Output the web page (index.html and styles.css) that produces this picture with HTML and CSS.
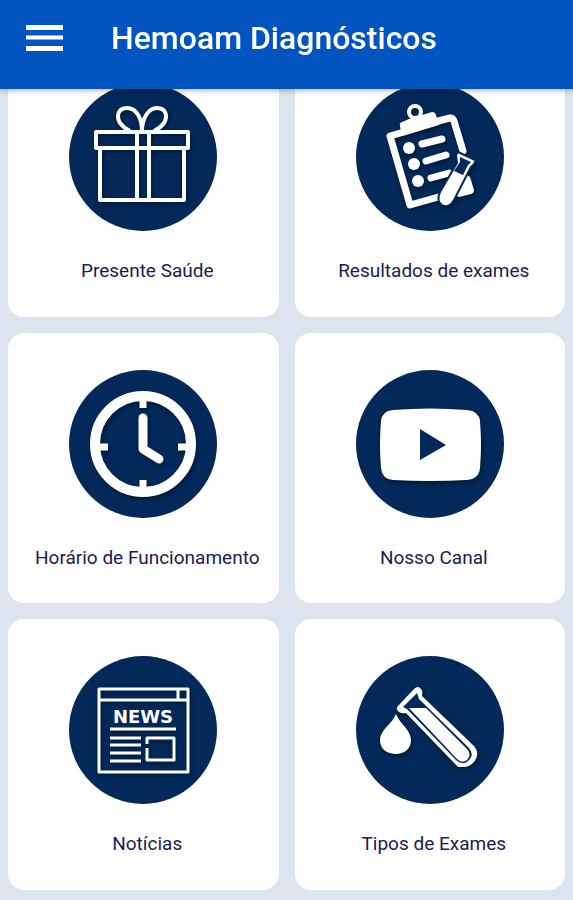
FILE: index.html
```
<!DOCTYPE html>
<html lang="pt-BR">

<head>
    <meta charset="UTF-8">
    <meta name="viewport" content="width=device-width, initial-scale=1.0">
    <title>Hemoam Diagnósticos</title>
    <link rel="stylesheet" href="styles.css">
</head>

<body>
    <header class="topbar">
        <button class="menu-btn" type="button" aria-label="Menu">
            <svg width="37" height="26" viewBox="0 0 37 26" fill="#fff">
                <path d="M0 0h37v5H0zM0 10.500h37v4H0zM0 21h37v5H0z" />
            </svg>
        </button>
        <h1 class="topbar-title">Hemoam Diagnósticos</h1>
    </header>

    <main class="cards">
        <a class="card" href="#presente">
            <svg class="card-icon" viewBox="0 0 148 148">
                <circle class="disc" cx="74" cy="74" r="74" />
                <g class="line">
                    <rect x="27" y="49" width="92" height="16" />
                    <path d="M31 65v52h84V65" />
                    <path d="M68 49v68M80 49v68" />
                    <path d="M73 48C73 36 68 25 58 25C49 25 47 33 51 40C54 44 57 46 61 48" />
                    <path d="M73 48C73 36 79 25 88 25C97 25 99 33 95 40C92 44 89 46 85 48" />
                </g>
            </svg>
            <span class="card-label">Presente Saúde</span>
        </a>

        <a class="card" href="#resultados">
            <svg class="card-icon" viewBox="0 0 148 148">
                <circle class="disc" cx="74" cy="74" r="74" />
                <g class="shape">
                    <!-- prancheta -->
                    <path d="M48 49L34 53L54 122L86 113M82 38L94 35Q97 35 98 38L107 68" fill="none" stroke="#fff" stroke-width="7" stroke-linejoin="round" stroke-linecap="round" />
                    <path d="M111 92L114 94L118 107Q118 110 115 111L103 114L99 112Z" fill="#fff" />
                    <path d="M44 43Q43 40 46 39L53 36L66 32L76 29Q79 29 80 32L81 36Q85 38 83 42L50 52Q45 53 45 49Z" fill="#fff" />
                    <circle cx="59" cy="29" r="6" fill="none" stroke="#fff" stroke-width="4" />
                    <circle cx="53" cy="65" r="6" fill="#fff" />
                    <circle cx="58" cy="81" r="6" fill="#fff" />
                    <circle cx="62" cy="98" r="6" fill="#fff" />
                    <path d="M66 61L86 56M70 78L90 72M75 95L93 90" stroke="#fff" stroke-width="7" stroke-linecap="round" />
                    <!-- tubo -->
                    <path d="M102 69L119 77Q120 80 115 84L98 117Q93 126 86 122Q80 118 84 109L101 80L100 72Z" fill="#fff" stroke="#02295a" stroke-width="2" />
                    <path d="M104 74L115 79L112 82L107 92L98 88L104 79Z" fill="#02295a" />
                </g>
            </svg>
            <span class="card-label">Resultados de exames</span>
        </a>

        <a class="card" href="#horario">
            <svg class="card-icon" viewBox="0 0 148 148">
                <circle class="disc" cx="74" cy="74" r="74" />
                <g class="shape" fill="none" stroke="#fff">
                    <circle cx="74" cy="74" r="48" stroke-width="10" />
                    <path d="M74 28v10M74 110v10M28 77h11M109 77h11" stroke-width="7" />
                    <path d="M74 48v31l16 10" stroke-width="9" stroke-linecap="round" stroke-linejoin="round" />
                </g>
            </svg>
            <span class="card-label">Horário de Funcionamento</span>
        </a>

        <a class="card" href="#canal">
            <svg class="card-icon" viewBox="0 0 148 148">
                <circle class="disc" cx="74" cy="74" r="74" />
                <g class="shape">
                    <path d="M37 40Q74 37 111 40Q123 41 124 51Q126 75 124 98Q123 109 111 110Q74 112 37 110Q26 109 25 98Q23 75 25 51Q26 41 37 40Z" fill="#fff" />
                    <path d="M64 59v31l26-15z" fill="#02295a" />
                </g>
            </svg>
            <span class="card-label">Nosso Canal</span>
        </a>

        <a class="card" href="#noticias">
            <svg class="card-icon" viewBox="0 0 148 148">
                <circle class="disc" cx="74" cy="74" r="74" />
                <g class="line news">
                    <rect x="30" y="33" width="89" height="83" />
                    <path d="M30 44h89M109 33v11" />
                    <path d="M41 73h66M41 82h31M41 89h31M41 97h31M41 105h31" />
                    <path d="M78 88v-6h27v22H78v-12" />
                </g>
                <text class="news-text" x="74" y="67" text-anchor="middle">NEWS</text>
            </svg>
            <span class="card-label">Notícias</span>
        </a>

        <a class="card" href="#tipos">
            <svg class="card-icon" viewBox="0 0 148 148">
                <circle class="disc" cx="74" cy="74" r="74" />
                <g class="shape">
                    <!-- gota -->
                    <path d="M40 58C44 68 55 74 55 84C55 93 48 98 40 98C31 98 24 93 24 84C24 74 36 68 40 58Z" fill="#fff" />
                    <!-- tubo -->
                    <path d="M42 50L58 33Q62 29 65 33Q67 35 66 40L118 90Q125 98 117 107Q113 111 108 111L102 111L50 57Q46 58 43 56Q39 53 42 50Z" fill="#fff" />
                    <path d="M47 51L61 37L63 43L113 92Q119 99 112 105Q106 110 100 104L51 53Z" fill="#02295a" />
                    <path d="M53 52L70 52L111 93Q116 99 111 104Q106 108 101 103Z" fill="#fff" />
                </g>
            </svg>
            <span class="card-label">Tipos de Exames</span>
        </a>
    </main>
</body>

</html>
```
FILE: styles.css
```
* {
    margin: 0;
    padding: 0;
    box-sizing: border-box;
}

body {
    background: #dee4ef;
    font-family: Roboto, "Liberation Sans", sans-serif;
}

.topbar {
    position: fixed;
    top: 0;
    left: 0;
    z-index: 10;
    display: flex;
    align-items: center;
    gap: 48px;
    width: 100%;
    height: 89px;
    padding: 0 26px 14px;
    background: #0254c1;
    box-shadow: 0 1px 6px rgba(0, 0, 0, .35);
}

.menu-btn {
    display: flex;
    border: 0;
    background: none;
    cursor: pointer;
}

.topbar-title {
    color: #fff;
    font-size: 32px;
    line-height: 40px;
    font-weight: 500;
    white-space: nowrap;
}

/* a lista passa por baixo da barra */
.cards {
    display: grid;
    grid-template-columns: 1fr 1fr;
    gap: 16px;
    padding: 46px 8px 10px;
}

.card {
    display: flex;
    flex-direction: column;
    align-items: center;
    gap: 28px;
    aspect-ratio: 1;
    padding-top: 37px;
    border-radius: 16px;
    background: #fff;
    color: #1d1a52;
    text-decoration: none;
}

.card-icon {
    width: 148px;
    height: 148px;
}

.card-label {
    padding-left: 8px;
    font-size: 19px;
    line-height: 24px;
    white-space: nowrap;
}

.disc {
    fill: #02295a;
}

.line {
    fill: none;
    stroke: #fff;
    stroke-width: 4;
    stroke-linejoin: round;
}

.news {
    stroke-width: 3;
}

.line,
.shape {
    filter: drop-shadow(1px 2px 2px rgba(0, 0, 0, .45));
}

.news-text {
    fill: #fff;
    font-family: "DejaVu Sans", Roboto, sans-serif;
    font-size: 18px;
    font-weight: 700;
}
```
